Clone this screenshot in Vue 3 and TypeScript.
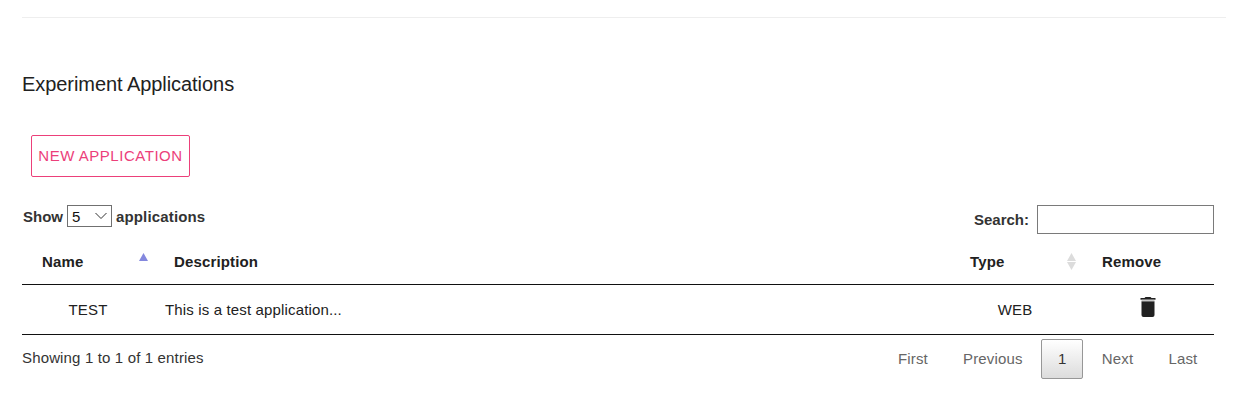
<script setup lang="ts">
interface Application {
  name: string
  description: string
  type: string
}

const applications: Application[] = [
  { name: 'TEST', description: 'This is a test application...', type: 'WEB' },
]
</script>

<template>
  <main class="page">
    <hr class="divider" />
    <h2 class="title">Experiment Applications</h2>
    <button class="new-button" type="button">NEW APPLICATION</button>

    <section class="data">
      <div class="toolbar">
        <div class="length">
          <span class="show">Show</span>
          <span class="select">
            <span class="value">5</span>
            <svg width="12" height="8" viewBox="0 0 12 8">
              <path d="M0.5 1L6 6.5L11.5 1" fill="none" stroke="#333" stroke-width="1" />
            </svg>
          </span>
          <span class="apps">applications</span>
        </div>
        <label class="search"><span>Search:</span><input type="text" /></label>
      </div>

      <div class="row head">
        <div class="cell">
          <span class="name">Name</span>
          <svg class="sort" width="9" height="17" viewBox="0 0 9 17">
            <path d="M4.5 0L9 8H0Z" fill="#8488de" />
          </svg>
        </div>
        <div class="cell"><span class="description">Description</span></div>
        <div class="cell">
          <span class="type">Type</span>
          <svg class="sort" width="9" height="17" viewBox="0 0 9 17">
            <path d="M4.5 0L9 8H0ZM0 9H9L4.5 17Z" fill="#dcdcdc" />
          </svg>
        </div>
        <div class="cell"><span class="remove">Remove</span></div>
      </div>

      <div v-for="app in applications" :key="app.name" class="row body">
        <div class="center">{{ app.name }}</div>
        <div class="text"><span class="sentence">{{ app.description }}</span></div>
        <div class="center kind">{{ app.type }}</div>
        <div class="center">
          <svg class="trash" width="16" height="20" viewBox="0 0 16 20">
            <path d="M0.5 1H4.5L5.5 0H10.5L11.5 1H15.5V2.7H0.5Z" fill="#212121" />
            <path d="M1.5 4.2H14.5V18Q14.5 20 12.5 20H3.5Q1.5 20 1.5 18Z" fill="#212121" />
            <path d="M1.5 2.7H14.5V4.2H1.5Z" fill="#c8c8c8" />
          </svg>
        </div>
      </div>

      <div class="footer">
        <span class="info">Showing 1 to 1 of 1 entries</span>
        <nav class="pages">
          <a class="page-link">First</a>
          <a class="page-link">Previous</a>
          <a class="page-link current">1</a>
          <a class="page-link">Next</a>
          <a class="page-link">Last</a>
        </nav>
      </div>
    </section>
  </main>
</template>

<style>
body {
  background: #fff;
}
</style>

<style scoped>
.page {
  box-sizing: border-box;
  height: 405px;
  padding: 17px 11px 0 22px;
  font: 15px/20px "Liberation Sans", Arial, sans-serif;
  letter-spacing: 0.15px;
  color: #333;
  overflow: hidden;
}
.divider {
  margin: 0;
  border: 0;
  height: 1px;
  background: #eee;
}
.title {
  margin: 54px 0 0;
  font-size: 20px;
  line-height: 24px;
  font-weight: 400;
  letter-spacing: -0.06px;
  color: #212121;
}
.new-button {
  display: block;
  box-sizing: border-box;
  width: 159px;
  height: 42px;
  margin: 39px 0 0 9px;
  padding: 0;
  border: 1px solid #ec407a;
  border-radius: 2px;
  background: #fff;
  color: #ec407a;
  font: 15px/20px "Liberation Sans", Arial, sans-serif;
  letter-spacing: 0.53px;
  white-space: nowrap;
}
.data {
  width: 1192px;
  margin-top: 28px;
}
.toolbar {
  display: flex;
  justify-content: space-between;
  align-items: flex-start;
  height: 34px;
  font-weight: 700;
}
.length {
  display: flex;
  align-items: center;
  height: 22px;
  padding-left: 1px;
}
.show,
.value,
.apps {
  padding-top: 2px;
}
.show {
  width: 44px;
  letter-spacing: 0;
}
.select {
  display: flex;
  align-items: center;
  justify-content: space-between;
  box-sizing: border-box;
  width: 45px;
  height: 22px;
  margin-right: 4px;
  padding: 0 4px;
  border: 1px solid #707070;
  color: #111;
  font-weight: 400;
}
.search {
  display: flex;
  align-items: center;
  letter-spacing: 0;
}
.search input {
  box-sizing: border-box;
  width: 177px;
  height: 29px;
  margin: 0 0 0 8px;
  padding: 0;
  border: 1px solid #7a7a7a;
  border-radius: 0;
  background: #fff;
}
.row {
  display: grid;
  grid-template-columns: 132px 796px 132px 132px;
  color: #212121;
}
.head {
  height: 45px;
  border-bottom: 1px solid #111;
  font-weight: 700;
}
.cell {
  display: flex;
  align-items: center;
  justify-content: space-between;
  padding: 0 6px 0 20px;
}
.sort {
  display: block;
}
.body {
  height: 49px;
  border-bottom: 1px solid #111;
  align-items: center;
}
.center {
  display: flex;
  justify-content: center;
}
.kind {
  padding-right: 2px;
}
.text {
  padding-left: 11px;
}
.trash {
  display: block;
  margin-bottom: 6px;
}
.footer {
  display: flex;
  justify-content: space-between;
  align-items: flex-start;
}
.info {
  padding-top: 13px;
}
.pages {
  display: flex;
  gap: 2px;
  padding-top: 4px;
}
.page-link {
  box-sizing: border-box;
  height: 40px;
  padding: 9px 15.6px;
  border: 1px solid transparent;
  border-radius: 2px;
  color: #666;
}
.current {
  width: 42px;
  padding: 9px 0;
  text-align: center;
  border-color: #979797;
  background: linear-gradient(#fff, #dcdcdc);
  color: #333;
}
</style>
